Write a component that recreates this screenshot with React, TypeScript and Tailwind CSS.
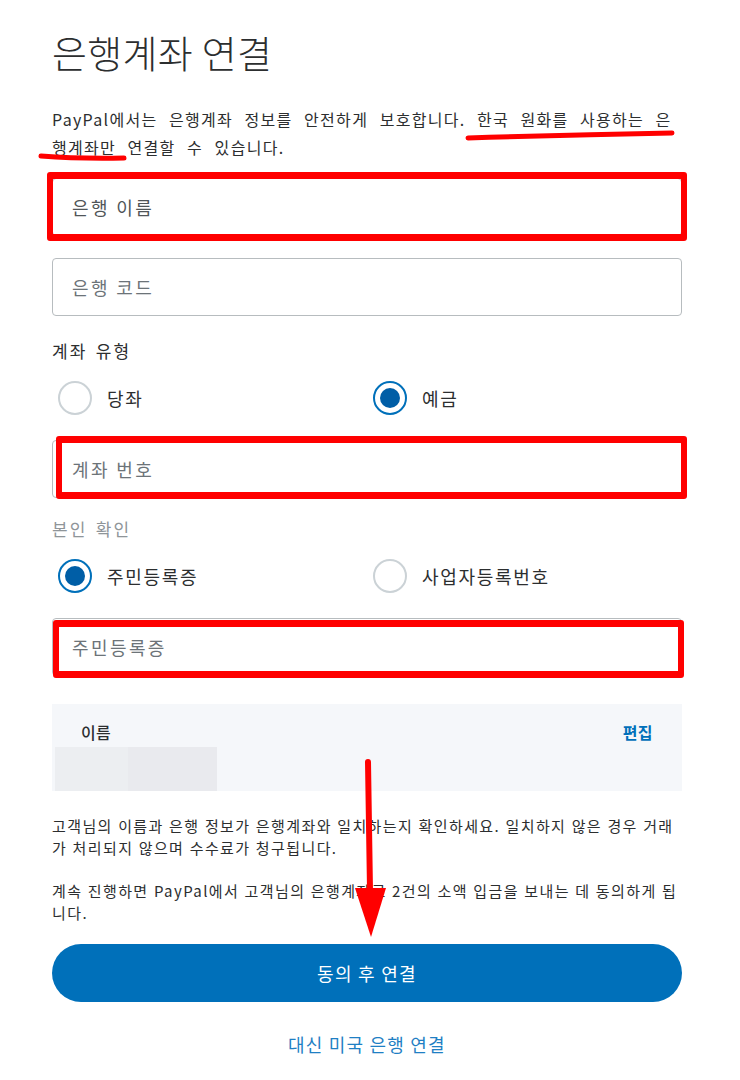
const font = { fontFamily: '"Noto Sans CJK KR", "Noto Sans", sans-serif' };

function Field({ placeholder, mark, dark }: { placeholder: string; mark?: string; dark?: boolean }) {
  return (
    <div className="relative">
      <div
        className={`flex h-[58px] items-center rounded-[4px] border border-[#b7bcbf] bg-white px-[19px] text-[18px] tracking-[2.4px] ${
          dark ? "text-[#505558]" : "text-[#6c7378]"
        }`}
      >
        {placeholder}
      </div>
      {mark && <div className={`pointer-events-none absolute rounded-[3px] border-[#ff0000] ${mark}`} />}
    </div>
  );
}

function Radio({ label, checked }: { label: string; checked?: boolean }) {
  return (
    <div className="flex items-center gap-[15px] pl-[6px]">
      {checked ? (
        <span className="flex h-[34px] w-[34px] items-center justify-center rounded-full border-2 border-[#0070ba] bg-white">
          <span className="h-[20px] w-[20px] rounded-full bg-[#005ea6]" />
        </span>
      ) : (
        <span className="h-[34px] w-[34px] rounded-full border-2 border-[#cbd2d6] bg-white" />
      )}
      <span className="text-[18px] leading-[26px] tracking-[1.7px] text-[#2c2e2f]">{label}</span>
    </div>
  );
}

export default function App() {
  return (
    <div className="relative min-h-[1080px] w-[740px] overflow-hidden bg-white pl-[52px] pr-[58px]" style={font}>
      <h1 className="pt-[26px] text-[38px] font-light leading-[52px] tracking-[0.3px] text-[#2c2e2f]">
        은행계좌 연결
      </h1>

      <p className="mt-[27px] text-[16px] leading-[28px] tracking-[1.3px] text-[#2c2e2f] [word-spacing:6.6px]">
        PayPal에서는 은행계좌 정보를 안전하게 보호합니다. 한국 원화를 사용하는 은행계좌만 연결할 수 있습니다.
      </p>

      <div className="mt-[17px]">
        <Field
          dark
          placeholder="은행 이름"
          mark="-left-[5px] -right-[5px] -top-[6px] -bottom-[5px] border-x-[6px] border-y-[7px]"
        />
      </div>
      <div className="mt-[22px]">
        <Field placeholder="은행 코드" />
      </div>

      <div className="mt-[24px] text-[17px] leading-[22px] tracking-[2.2px] text-[#2c2e2f] [word-spacing:2px]">
        계좌 유형
      </div>
      <div className="mt-[19px] grid grid-cols-2">
        <Radio label="당좌" />
        <Radio label="예금" checked />
      </div>

      <div className="mt-[25px]">
        <Field
          placeholder="계좌 번호"
          mark="left-[4px] -right-[5px] -top-[4px] -bottom-[1px] border-x-[6px] border-y-[7px]"
        />
      </div>

      <div className="mt-[20px] text-[17px] leading-[22px] tracking-[2.2px] text-[#8f9599] [word-spacing:2px]">
        본인 확인
      </div>
      <div className="mt-[19px] grid grid-cols-2">
        <Radio label="주민등록증" checked />
        <Radio label="사업자등록번호" />
      </div>

      <div className="mt-[25px]">
        <Field
          placeholder="주민등록증"
          mark="left-[1px] right-[-2px] top-[2px] -bottom-[2px] border-x-[6px] border-y-[7px]"
        />
      </div>

      <div className="mt-[28px] h-[87px] bg-[#f5f7fa] pl-[3px]">
        <div className="flex h-[43px] items-end justify-between pb-[3px] pl-[26px] pr-[29px]">
          <span className="text-[16px] font-medium tracking-[0.4px] text-[#2c2e2f]">이름</span>
          <span className="text-[16px] font-bold tracking-[0.4px] text-[#0070ba]">편집</span>
        </div>
        <div className="flex h-[44px] w-[162px]">
          <div className="w-[73px] bg-[#eceef1]" />
          <div className="flex-1 bg-[#e9eaee]" />
        </div>
      </div>

      <p className="mt-[24px] text-[15px] leading-[22px] tracking-[1.4px] text-[#2c2e2f] [word-spacing:0.6px]">
        고객님의 이름과 은행 정보가 은행계좌와 일치하는지 확인하세요. 일치하지 않은 경우 거래가 처리되지 않으며 수수료가 청구됩니다.
      </p>
      <p className="mt-[21px] text-[15px] leading-[22px] tracking-[1.4px] text-[#2c2e2f] [word-spacing:0.6px]">
        계속 진행하면 PayPal에서 고객님의 은행계좌로 2건의 소액 입금을 보내는 데 동의하게 됩니다.
      </p>

      <button className="mt-[20px] flex h-[58px] w-full items-center justify-center rounded-full bg-[#0070ba] text-[18px] font-normal tracking-[1.3px] text-white">
        동의 후 연결
      </button>

      <div className="mt-[29px] text-center text-[18px] tracking-[1.2px] text-[#1f7fc4]">대신 미국 은행 연결</div>

      {/* red annotations drawn over the screenshot */}
      <svg className="pointer-events-none absolute left-0 top-0" width="740" height="1080">
        <path d="M468 138 Q570 135 672 133" stroke="#ff0000" strokeWidth="5" strokeLinecap="round" fill="none" />
        <path d="M41 156 Q80 159 124 158" stroke="#ff0000" strokeWidth="5" strokeLinecap="round" fill="none" />
        <path d="M368 762 L370 890" stroke="#ff0000" strokeWidth="6" strokeLinecap="round" fill="none" />
        <path d="M355 888 L386 888 L371 937 Z" fill="#ff0000" />
      </svg>
    </div>
  );
}
